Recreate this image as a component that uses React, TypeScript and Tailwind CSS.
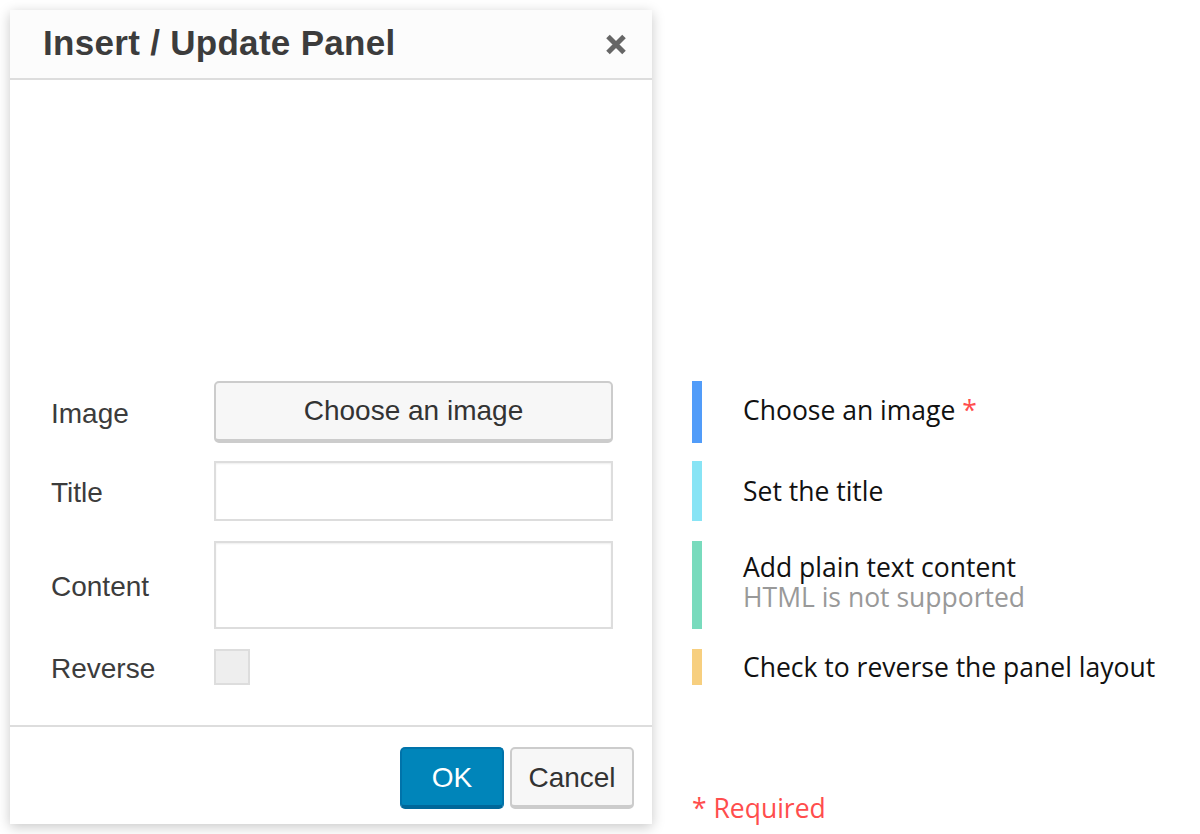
import React from "react";

const dialogFont = { fontFamily: '"Liberation Sans", Arial, sans-serif' };
const noteFont = { fontFamily: '"Open Sans", "Noto Sans", sans-serif' };

function CloseIcon() {
  return (
    <svg width="22" height="21" viewBox="0 0 22 21" aria-hidden="true">
      <path d="M3 2.5 L19 18.5 M19 2.5 L3 18.5" stroke="#666" strokeWidth="5" strokeLinecap="butt" />
    </svg>
  );
}

function Row({ label, children, h }: { label: string; children: React.ReactNode; h: string }) {
  return (
    <div className={`flex items-center ${h}`}>
      <div className="w-[163px] shrink-0 text-[28px] text-[#3c3c3c] pt-[3px]">{label}</div>
      {children}
    </div>
  );
}

function Note({ color, h, children }: { color: string; h: string; children: React.ReactNode }) {
  return (
    <div className={`flex items-stretch ${h}`}>
      <div className={`w-[10px] shrink-0 ${color}`} />
      <div className="flex flex-col justify-center pl-[41px] text-[26.5px] leading-[30px] text-[#111]">{children}</div>
    </div>
  );
}

export default function App() {
  return (
    <div className="min-h-screen bg-white p-[10px] flex items-start">
      {/* dialog */}
      <div
        className="w-[642px] h-[814px] shrink-0 flex flex-col bg-white shadow-[0_3px_12px_rgba(0,0,0,0.22)]"
        style={dialogFont}
      >
        <div className="h-[70px] shrink-0 flex items-center justify-between bg-[#fcfcfc] border-b-2 border-[#dddddd] pl-[33px] pr-[25px]">
          <h1 className="text-[35px] font-bold text-[#3c3c3c] tracking-[0.3px] pb-[2px]">Insert / Update Panel</h1>
          <button className="flex items-center justify-center">
            <CloseIcon />
          </button>
        </div>

        <div className="flex-1 flex flex-col justify-end gap-[18px] pl-[41px] pr-[39px] pb-[40px]">
          <Row label="Image" h="h-[62px]">
            <button className="w-[399px] h-[62px] rounded-[5px] border-2 border-b-4 border-[#cccccc] bg-[#f7f7f7] text-[28px] text-[#333]">
              Choose an image
            </button>
          </Row>
          <Row label="Title" h="h-[60px]">
            <input className="w-[399px] h-[60px] border-2 border-[#dddddd] bg-white shadow-[inset_0_1px_2px_rgba(0,0,0,0.07)] outline-none" />
          </Row>
          <Row label="Content" h="h-[88px] mt-[2px]">
            <textarea className="w-[399px] h-[88px] border-2 border-[#dddddd] bg-white shadow-[inset_0_1px_2px_rgba(0,0,0,0.07)] outline-none resize-none" />
          </Row>
          <Row label="Reverse" h="h-[36px] mt-[2px]">
            <div className="w-[36px] h-[36px] border-2 border-[#dddddd] bg-[#eeeeee]" />
          </Row>
        </div>

        <div className="h-[99px] shrink-0 flex items-center justify-end gap-[6px] border-t-2 border-[#dddddd] pr-[18px] pt-[4px]">
          <button className="w-[104px] h-[62px] rounded-[5px] bg-[#0085ba] border-2 border-b-4 border-[#0073aa] border-b-[#006799] text-white text-[28px] pt-[2px]">
            OK
          </button>
          <button className="w-[124px] h-[62px] rounded-[5px] bg-[#f7f7f7] border-2 border-b-4 border-[#cccccc] text-[#333] text-[28px] pt-[2px]">
            Cancel
          </button>
        </div>
      </div>

      {/* notes */}
      <div className="ml-[40px] pt-[371px] flex flex-col" style={noteFont}>
        <Note color="bg-[#519cf9]" h="h-[62px]">
          <div className="-mt-[5px]">
            Choose an image <span className="text-[#ff4d4d]">*</span>
          </div>
        </Note>
        <div className="h-[18px]" />
        <Note color="bg-[#88e4f5]" h="h-[60px]">
          <div>Set the title</div>
        </Note>
        <div className="h-[20px]" />
        <Note color="bg-[#79dbbd]" h="h-[88px]">
          <div className="-mt-[6px]">Add plain text content</div>
          <div className="text-[#999]">HTML is not supported</div>
        </Note>
        <div className="h-[20px]" />
        <Note color="bg-[#f7cf7f]" h="h-[36px]">
          <div className="whitespace-nowrap">Check to reverse the panel layout</div>
        </Note>
        <div className="mt-[105px] text-[26.5px] leading-[36px] text-[#ff4d4d]">* Required</div>
      </div>
    </div>
  );
}
